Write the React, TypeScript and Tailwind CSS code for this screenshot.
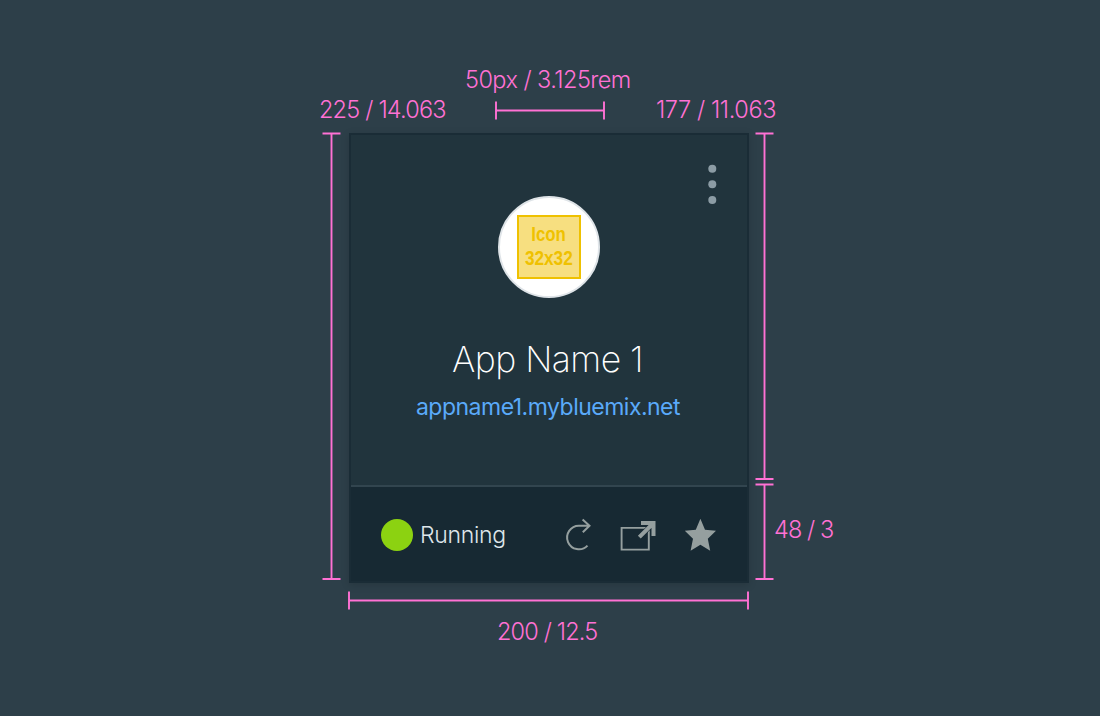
import type { ReactNode } from "react";

const PINK = "#ff71d4";

function Label({ children, className }: { children: ReactNode; className: string }) {
  return (
    <span className={`block whitespace-nowrap text-[23.5px] leading-7 font-light text-[#ff71d4] ${className}`}>
      {children}
    </span>
  );
}

function HRule({ width }: { width: number }) {
  return (
    <svg width={width} height={19} className="block" stroke={PINK} strokeWidth={1.9}>
      <path d={`M1 .5V18.5M${width - 1} .5V18.5M1 9.5H${width - 1}`} />
    </svg>
  );
}

function VRule({ height }: { height: number }) {
  return (
    <svg width={19} height={height} className="block" stroke={PINK} strokeWidth={1.9}>
      <path d={`M.5 1.5H18.5M.5 ${height - 1}H18.5M9.5 1.5V${height - 1}`} />
    </svg>
  );
}

function AppCard() {
  return (
    <div className="flex h-[450px] w-[400px] flex-col border-2 border-[#1a2c36] bg-[#21343d] shadow-[0_2px_8px_rgba(0,0,0,0.15)]">
      <div className="flex h-[350px] flex-col items-center">
        <div className="flex h-[61px] w-full justify-end pt-[29px] pr-[30px]">
          <svg width="10" height="44" fill="#8c9ca5" className="shrink-0">
            <circle cx="5.3" cy="4.7" r="4" />
            <circle cx="5.3" cy="20.3" r="4" />
            <circle cx="5.3" cy="36" r="4" />
          </svg>
        </div>
        <div className="flex size-[102px] shrink-0 items-center justify-center rounded-full border-2 border-[#dfe4e8] bg-white">
          <div className="flex size-16 flex-col items-center justify-center border-2 border-[#efc100] bg-[#f7df80] pb-[2px] text-center font-['Liberation_Sans',sans-serif] text-[20px] leading-6 font-bold text-[#efc100]">
            <span className="scale-x-[0.84]">Icon</span>
            <span className="scale-x-[0.86]">32x32</span>
          </div>
        </div>
        <div className="mt-[40px] pr-[3px] text-[35.5px] leading-[44px] font-[250] tracking-[-0.55px] text-white">App Name 1</div>
        <div className="mt-[11px] pr-[2px] text-[23px] leading-7 font-normal tracking-[-0.51px] text-[#5aaafa]">
          appname1.mybluemix.net
        </div>
      </div>
      <div className="flex h-[96px] items-center border-t-2 border-[#32454f] bg-[#172933] pt-px pr-[25px] pl-[30px]">
        <div className="size-8 rounded-full bg-[#8cd211]" />
        <div className="ml-[7px] w-[140px] text-[23px] leading-7 font-light tracking-[-0.3px] text-[#dfe6eb]">Running</div>
        <svg width="160" height="40" viewBox="560 515 160 40" fill="none" className="shrink-0">
          <path d="M589.5 525.7H579.2A11.8 11.8 0 1 0 587.5 545.6M582.6 519.4L589.5 525.7L582.8 532.3" stroke="#959f9f" strokeWidth="2" />
          <path d="M621.6 527.9H648.8V549.6H621.6Z" stroke="#959f9f" strokeWidth="1.9" />
          <path d="M639.3 537.2L653 523.5" stroke="#172933" strokeWidth="5" />
          <path d="M641 523H653.5V536M639.3 537.2L653 523.5" stroke="#959f9f" strokeWidth="4" />
          <path d="M700.4 518.7L705 529.8L716 530.7L707.8 538.7L710.2 550.7L700.4 544.8L690.6 550.7L693 538.7L684.8 530.7L695.8 529.8Z" fill="#959f9f" />
        </svg>
      </div>
    </div>
  );
}

export default function App() {
  return (
    <div className="flex h-[716px] w-[1100px] flex-col overflow-hidden bg-[#2d3f49] font-['Inter',sans-serif]">
      <div className="flex h-[96px] pt-[66px] pl-[465px]">
        <Label className="tracking-[-0.55px]">50px / 3.125rem</Label>
      </div>
      <div className="flex h-[36px] items-start pl-[319px]">
        <Label className="w-[176px] tracking-[-0.8px]">225 / 14.063</Label>
        <div className="w-[161px] pt-[5px]">
          <HRule width={110} />
        </div>
        <Label className="tracking-[-0.4px]">177 / 11.063</Label>
      </div>
      <div className="flex h-[459px] items-start pl-[322px]">
        <VRule height={448} />
        <div className="mt-px ml-2">
          <AppCard />
        </div>
        <div className="ml-[6px] flex flex-col gap-[3px]">
          <VRule height={348} />
          <VRule height={97} />
        </div>
        <Label className="mt-[384px] tracking-[-0.9px]">48 / 3</Label>
      </div>
      <div className="pl-[348px]">
        <HRule width={401} />
      </div>
      <div className="flex pt-[8px] pl-[497px]">
        <Label className="tracking-[-0.85px]">200 / 12.5</Label>
      </div>
    </div>
  );
}
